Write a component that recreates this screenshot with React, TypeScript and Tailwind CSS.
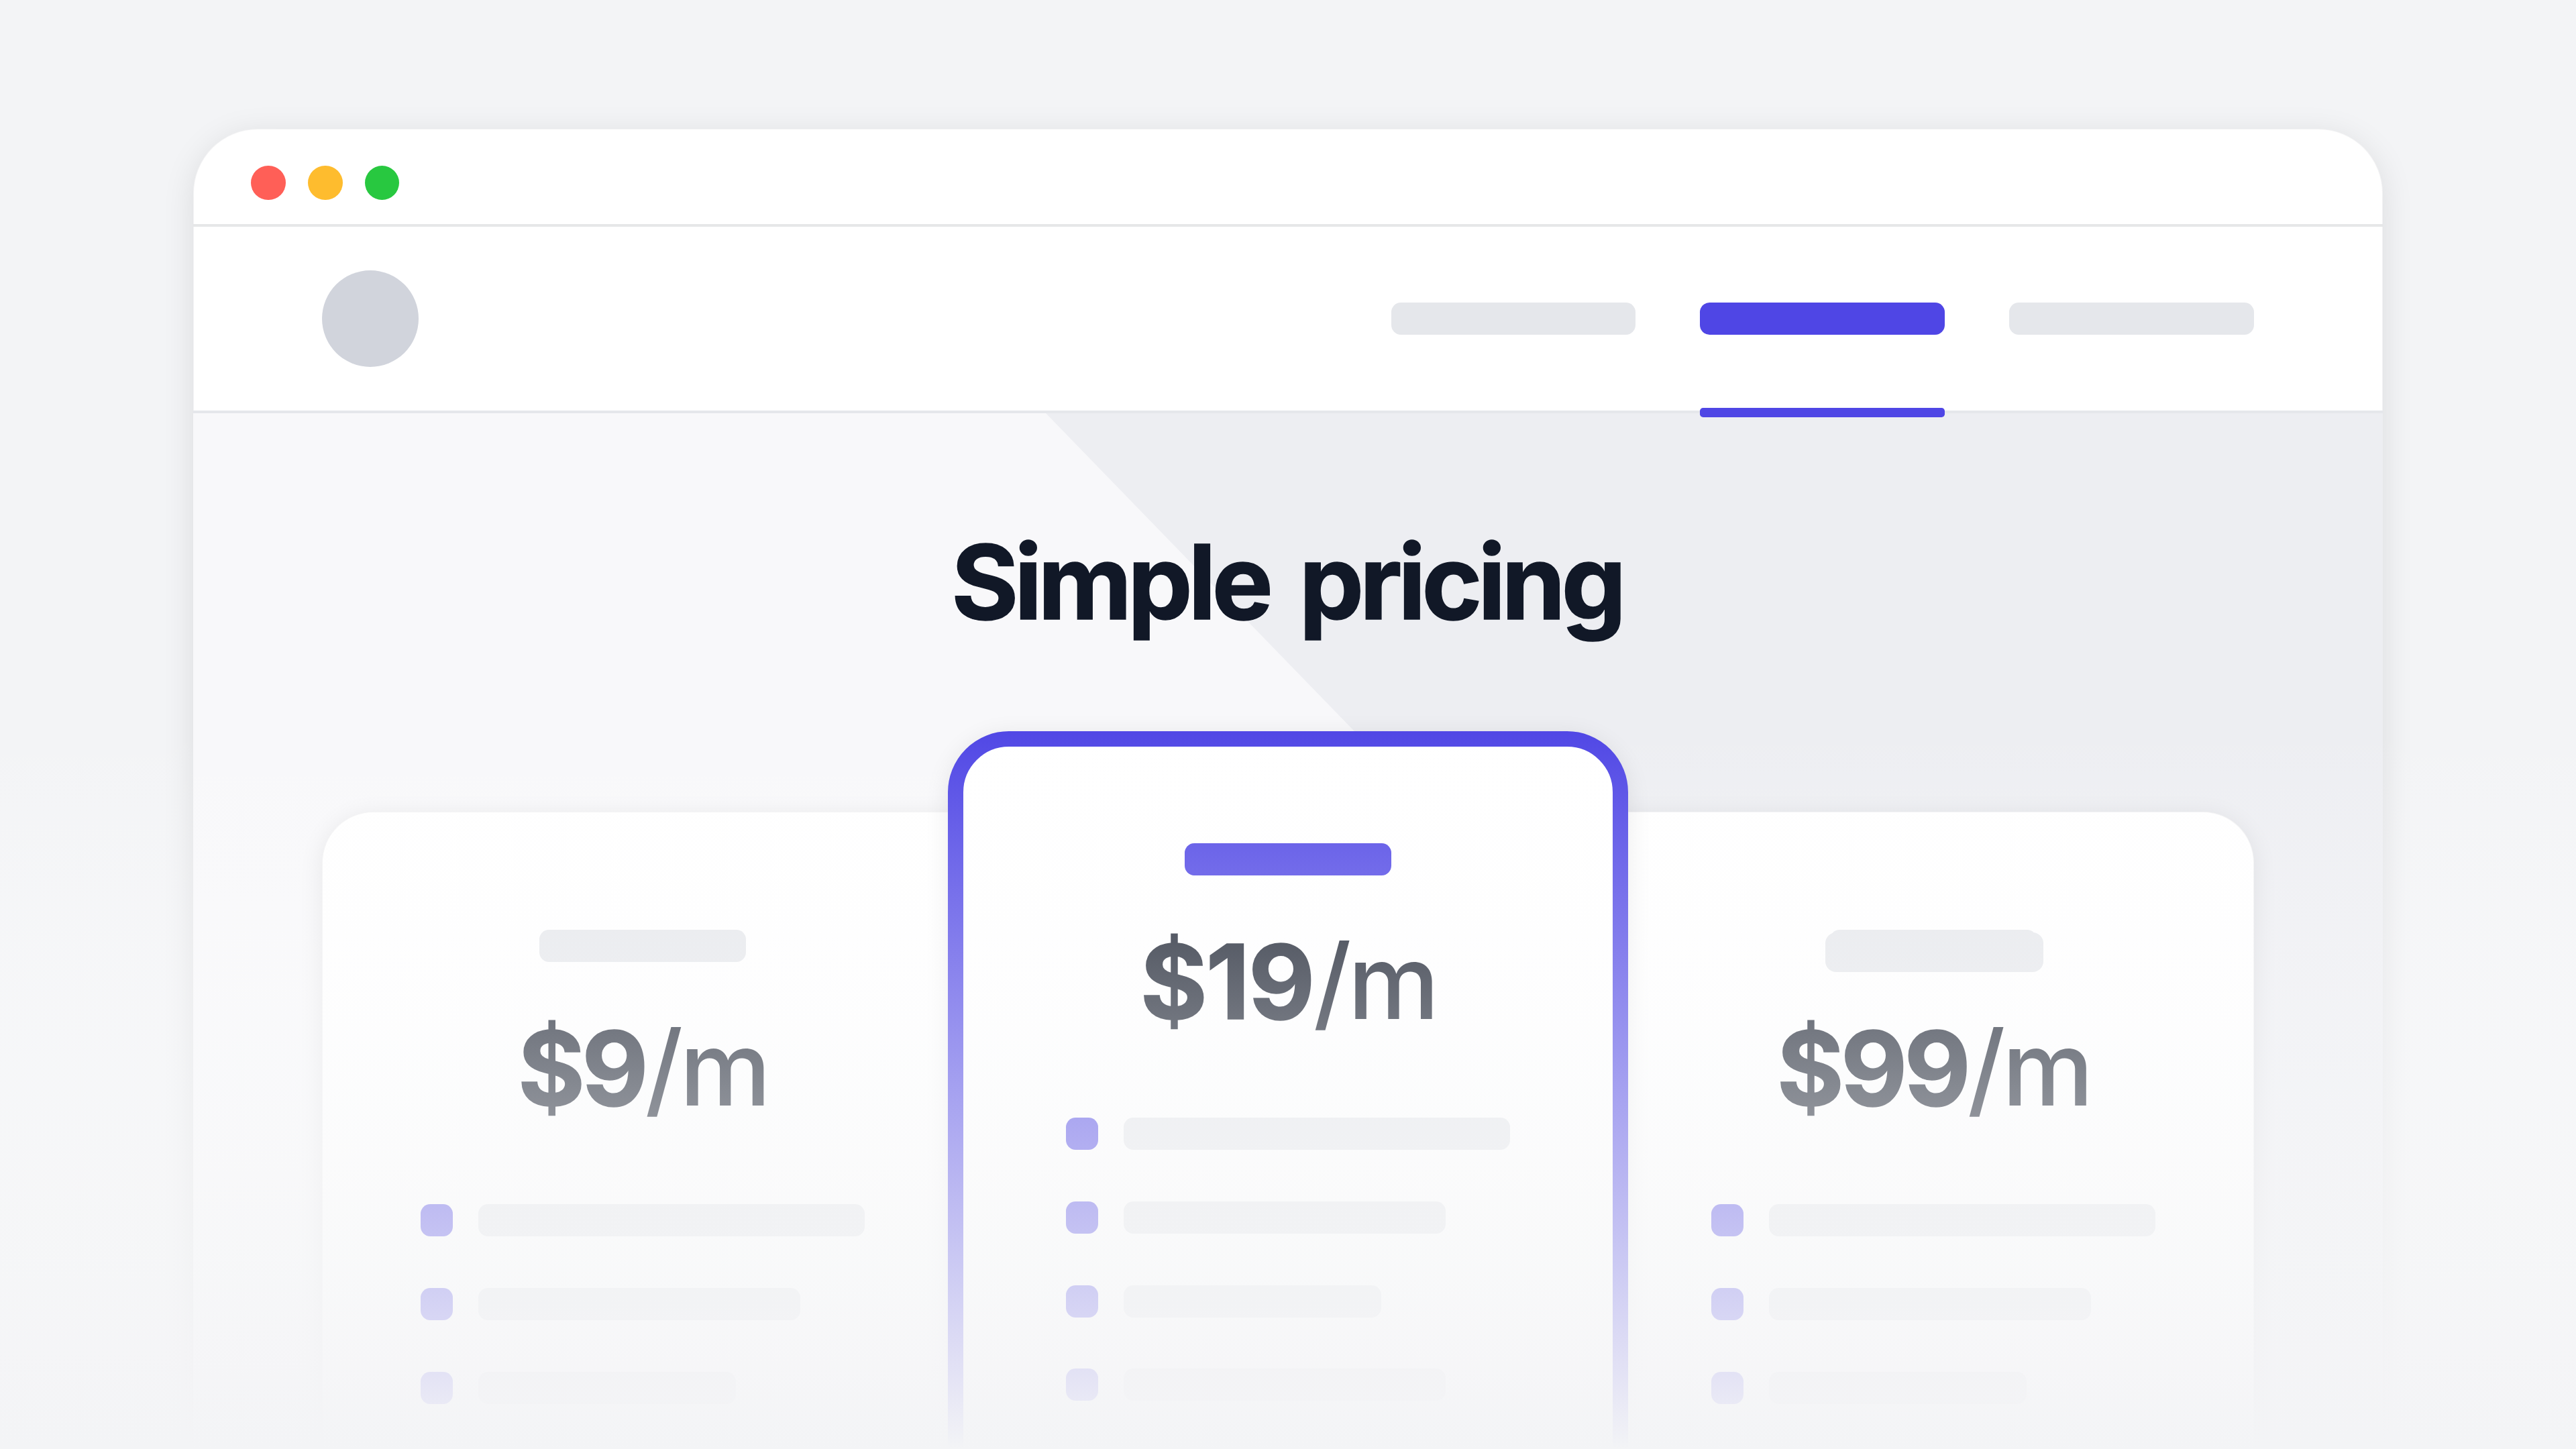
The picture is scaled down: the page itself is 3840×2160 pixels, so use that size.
type Plan = {
  price: string;
  features: number[];
  side: 'left' | 'center' | 'right';
};

const plans: Plan[] = [
  { price: '$9', features: [576, 480, 384], side: 'left' },
  { price: '$19', features: [576, 480, 384, 480], side: 'center' },
  { price: '$99', features: [576, 480, 384], side: 'right' },
];

const cardStyles = {
  left: 'mt-[120px] h-[1080px] w-[956px] rounded-l-[76px] pt-[176px] shadow-[0_7px_36px_rgba(0,0,0,0.09),inset_0_0_0_1px_rgba(17,24,39,0.05)]',
  center:
    'relative z-10 -mx-[23px] h-[1200px] w-[1014px] rounded-[91px] border-[23px] border-[#4f46e5] pt-[144px] shadow-[0_7px_36px_rgba(0,0,0,0.09)]',
  right:
    'mt-[120px] h-[1080px] w-[956px] rounded-r-[76px] pt-[176px] shadow-[0_7px_36px_rgba(0,0,0,0.09),inset_0_0_0_1px_rgba(17,24,39,0.05)]',
};

function WindowBar() {
  return (
    <div className="flex h-[146px] items-center gap-[33px] border-b-4 border-[#e6e7e8] pt-[19px] pl-[86.4px]">
      <span className="size-[51.6px] rounded-full bg-[#ff5f57]" />
      <span className="size-[51.6px] rounded-full bg-[#febc2e]" />
      <span className="size-[51.6px] rounded-full bg-[#28c840]" />
    </div>
  );
}

function NavBar() {
  return (
    <div className="relative z-10 flex h-[278px] items-center justify-between border-b-4 border-[#e5e7eb] px-[192px]">
      <div className="size-36 rounded-full bg-[#d1d4dc]" />
      <div className="flex h-full items-center gap-24">
        <div className="h-12 w-[364.8px] rounded-[14.4px] bg-[#e5e7eb]" />
        <div className="relative flex h-full items-center">
          <div className="h-12 w-[364.8px] rounded-[14.4px] bg-[#4f46e5]" />
          <div className="absolute -bottom-[10px] left-0 h-[14.4px] w-full rounded-[4.8px] bg-[#4f46e5]" />
        </div>
        <div className="h-12 w-[364.8px] rounded-[14.4px] bg-[#e5e7eb]" />
      </div>
    </div>
  );
}

function PlanCard({ plan }: { plan: Plan }) {
  const center = plan.side === 'center';

  return (
    <div className={`shrink-0 bg-white ${cardStyles[plan.side]}`}>
      <div className="flex flex-col items-center">
        <div className={`relative h-12 w-[307.2px] rounded-[14.4px] ${center ? 'bg-[#4f46e5]' : 'bg-[#e5e7eb]'}`}>
          {plan.side === 'right' && (
            <div className="absolute top-[3.5px] -left-[7px] h-[59px] w-[325px] rounded-[16px] bg-[#e5e7eb]" />
          )}
        </div>
        <div className="mt-[65px] text-[153.6px] leading-[186px] font-bold tracking-[-0.034em] whitespace-nowrap text-[#111827]">
          <span className={`[-webkit-text-stroke:1.5px_#111827] ${center ? 'tracking-[-0.018em]' : ''}`}>
            {plan.price}
          </span>
          <span className="font-medium">/m</span>
        </div>
      </div>
      <div className={`mt-[110px] flex flex-col gap-[76.8px] ${center ? 'pl-[153px]' : 'pl-[147px]'}`}>
        {plan.features.map((width, i) => (
          <div key={i} className="flex gap-[38.4px]">
            <div className="size-12 rounded-[14.4px] bg-[#4f46e5]" />
            <div className="h-12 rounded-[14.4px] bg-[#e5e7eb]" style={{ width }} />
          </div>
        ))}
      </div>
    </div>
  );
}

export default function App() {
  return (
    <div className="relative h-[2160px] w-[3840px] overflow-hidden bg-[#f3f4f6] px-[288px] pt-[192px] font-['Inter',sans-serif]">
      <div className="h-[2300px] rounded-[96px] bg-white shadow-[0_9.6px_48px_rgba(0,0,0,0.1),inset_0_0_0_1px_rgba(17,24,39,0.05)]">
        <WindowBar />
        <NavBar />
        <div className="relative h-[1876px] bg-[#f8f8fa]">
          {/* diagonal shade behind the hero */}
          <div className="absolute inset-0 bg-[#edeef2] [clip-path:polygon(1271px_0,100%_0,100%_100%,3091px_100%)]" />
          <div className="relative">
            <h1 className="pt-[158px] pr-1 text-center text-[153.6px] leading-[186px] font-bold tracking-[-0.042em] text-[#111827] [-webkit-text-stroke:1.5px_#111827] [word-spacing:15px]">
              Simple pricing
            </h1>
            <div className="mt-[130px] flex items-start justify-between px-[192px]">
              {plans.map((plan) => (
                <PlanCard key={plan.price} plan={plan} />
              ))}
            </div>
          </div>
        </div>
      </div>
      {/* fade the lower half: transparent white drifting into the page colour */}
      <div className="absolute inset-x-0 bottom-0 z-20 h-[1080px] bg-[linear-gradient(to_bottom,rgba(255,255,255,0),rgba(252,252,253,0.25)_25%,rgba(251,251,252,0.375)_37.5%,rgba(249,250,251,0.5)_50%,rgba(248,248,249,0.625)_62.5%,rgba(246,247,248,0.75)_75%,rgba(245,245,247,0.875)_87.5%,rgb(243,244,246))]" />
    </div>
  );
}
